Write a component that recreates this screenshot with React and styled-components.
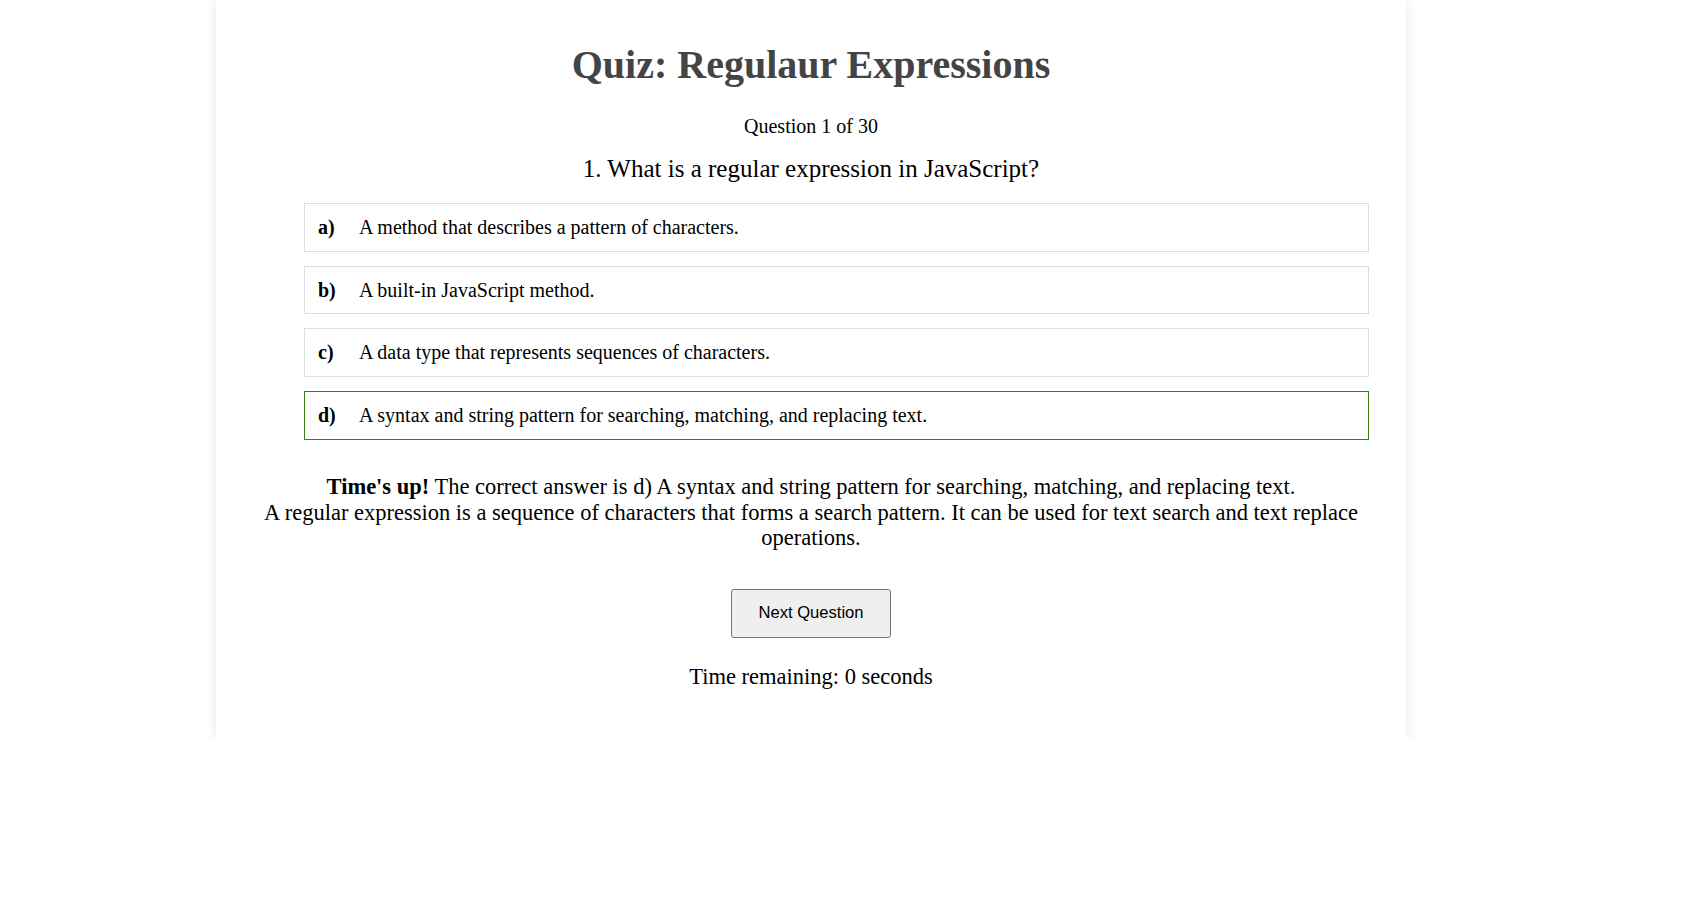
import React from 'react';
import styled, { createGlobalStyle } from 'styled-components';

const GlobalStyle = createGlobalStyle`
    body {
        margin: 0;
        background: #fff;
        font-family: "Liberation Serif", "Times New Roman", serif;
        color: #000;
    }
`

const Page = styled.div`
    padding-left: 216px;
`

const Card = styled.div`
    box-sizing: border-box;
    width: 1190px;
    min-height: 739px;
    padding: 20px 20px 40px;
    background: #fff;
    box-shadow: 0 0 12px rgba(0, 0, 0, 0.1);
    text-align: center;
`

const Title = styled.h1`
    margin: 21px 0 0;
    font-size: 40px;
    font-weight: bold;
    color: #444;
`

const Counter = styled.p`
    margin: 27px 0 0;
    font-size: 20px;
`

const Question = styled.h2`
    margin: 17px 0 0;
    font-size: 25px;
    font-weight: normal;
`

const OptionList = styled.ul`
    list-style: none;
    margin: 20px 17px 0 68px;
    padding: 0;
    text-align: left;
`

const Option = styled.li`
    display: flex;
    align-items: center;
    padding: 12px 13px;
    margin-bottom: 14px;
    line-height: 22.7px;
    font-size: 20px;
    border: 1px solid ${props => (props.correct ? '#3a7d0c' : '#ddd')};
`

const Letter = styled.span`
    width: 41px;
    flex-shrink: 0;
    font-weight: bold;
`

const Feedback = styled.p`
    margin: 34px 0 0;
    font-size: 22.5px;
    line-height: 25.7px;
`

const ButtonRow = styled.div`
    display: flex;
    justify-content: center;
    margin-top: 38px;
`

const NextButton = styled.button`
    height: 49px;
    padding: 0 26px;
    font-family: "Liberation Sans", Arial, sans-serif;
    font-size: 16.6px;
    color: #000;
    background: #efefef;
    border: 1px solid #767676;
    border-radius: 3px;
    cursor: pointer;
`

const Timer = styled.p`
    margin: 26px 0 0;
    font-size: 22.5px;
`

const options = [
    { letter: 'a)', text: 'A method that describes a pattern of characters.' },
    { letter: 'b)', text: 'A built-in JavaScript method.' },
    { letter: 'c)', text: 'A data type that represents sequences of characters.' },
    { letter: 'd)', text: 'A syntax and string pattern for searching, matching, and replacing text.', correct: true },
]

const App = () => {
    return (
        <Page>
            <GlobalStyle />
            <Card>
                <Title>Quiz: Regulaur Expressions</Title>
                <Counter>Question 1 of 30</Counter>
                <Question>1. What is a regular expression in JavaScript?</Question>
                <OptionList>
                    {options.map(o => (
                        <Option key={o.letter} correct={o.correct}>
                            <Letter>{o.letter}</Letter>
                            <span>{o.text}</span>
                        </Option>
                    ))}
                </OptionList>
                <Feedback>
                    <strong>Time's up!</strong> The correct answer is d) A syntax and string pattern for searching, matching, and replacing text.
                    <br />
                    A regular expression is a sequence of characters that forms a search pattern. It can be used for text search and text replace operations.
                </Feedback>
                <ButtonRow>
                    <NextButton>Next Question</NextButton>
                </ButtonRow>
                <Timer>Time remaining: 0 seconds</Timer>
            </Card>
        </Page>
    )
}

export default App
